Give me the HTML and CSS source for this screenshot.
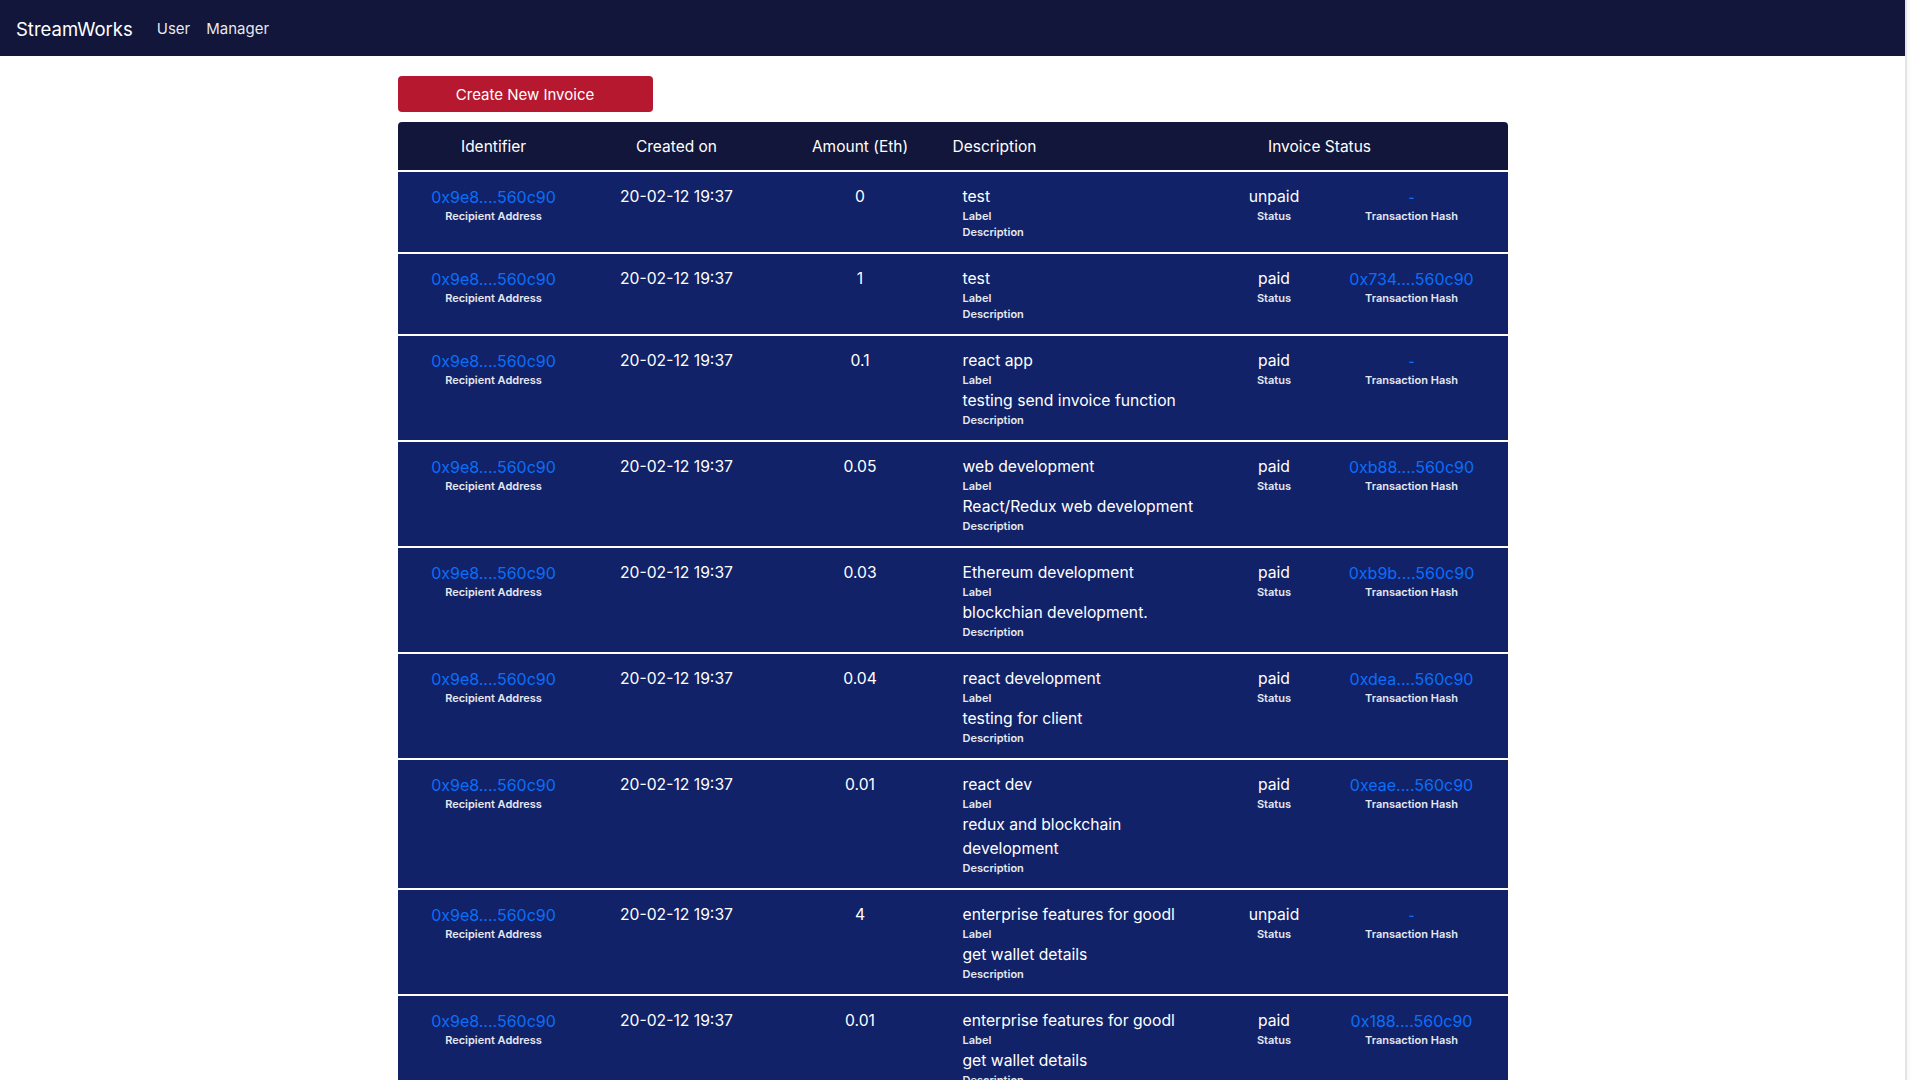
FILE: index.html
```html
<!DOCTYPE html>
<html lang="en">
<head>
<meta charset="utf-8">
<title>StreamWorks</title>
<link rel="stylesheet" href="styles.css">
</head>
<body>
<div class="app">
  <nav class="navbar">
    <span class="brand">StreamWorks</span>
    <a class="nav-link">User</a>
    <a class="nav-link">Manager</a>
  </nav>
  <main class="container">
    <button class="btn-create">Create New Invoice</button>
    <div class="table">
      <div class="thead">
        <div class="th">Identifier</div>
        <div class="th">Created on</div>
        <div class="th">Amount (Eth)</div>
        <div class="th th-left">Description</div>
        <div class="th">Invoice Status</div>
      </div>

      <div class="row">
        <div class="cell"><a class="link">0x9e8....560c90</a><span class="sub">Recipient Address</span></div>
        <div class="cell">20-02-12 19:37</div>
        <div class="cell">0</div>
        <div class="cell cell-desc"><span class="main">test</span><span class="sub">Label</span><span class="sub">Description</span></div>
        <div class="cell"><span class="main">unpaid</span><span class="sub">Status</span></div>
        <div class="cell"><a class="link dash">-</a><span class="sub">Transaction Hash</span></div>
      </div>

      <div class="row">
        <div class="cell"><a class="link">0x9e8....560c90</a><span class="sub">Recipient Address</span></div>
        <div class="cell">20-02-12 19:37</div>
        <div class="cell">1</div>
        <div class="cell cell-desc"><span class="main">test</span><span class="sub">Label</span><span class="sub">Description</span></div>
        <div class="cell"><span class="main">paid</span><span class="sub">Status</span></div>
        <div class="cell"><a class="link">0x734....560c90</a><span class="sub">Transaction Hash</span></div>
      </div>

      <div class="row">
        <div class="cell"><a class="link">0x9e8....560c90</a><span class="sub">Recipient Address</span></div>
        <div class="cell">20-02-12 19:37</div>
        <div class="cell">0.1</div>
        <div class="cell cell-desc"><span class="main">react app</span><span class="sub">Label</span><span class="main">testing send invoice function</span><span class="sub">Description</span></div>
        <div class="cell"><span class="main">paid</span><span class="sub">Status</span></div>
        <div class="cell"><a class="link dash">-</a><span class="sub">Transaction Hash</span></div>
      </div>

      <div class="row">
        <div class="cell"><a class="link">0x9e8....560c90</a><span class="sub">Recipient Address</span></div>
        <div class="cell">20-02-12 19:37</div>
        <div class="cell">0.05</div>
        <div class="cell cell-desc"><span class="main">web development</span><span class="sub">Label</span><span class="main">React/Redux web development</span><span class="sub">Description</span></div>
        <div class="cell"><span class="main">paid</span><span class="sub">Status</span></div>
        <div class="cell"><a class="link">0xb88....560c90</a><span class="sub">Transaction Hash</span></div>
      </div>

      <div class="row">
        <div class="cell"><a class="link">0x9e8....560c90</a><span class="sub">Recipient Address</span></div>
        <div class="cell">20-02-12 19:37</div>
        <div class="cell">0.03</div>
        <div class="cell cell-desc"><span class="main">Ethereum development</span><span class="sub">Label</span><span class="main">blockchian development.</span><span class="sub">Description</span></div>
        <div class="cell"><span class="main">paid</span><span class="sub">Status</span></div>
        <div class="cell"><a class="link">0xb9b....560c90</a><span class="sub">Transaction Hash</span></div>
      </div>

      <div class="row">
        <div class="cell"><a class="link">0x9e8....560c90</a><span class="sub">Recipient Address</span></div>
        <div class="cell">20-02-12 19:37</div>
        <div class="cell">0.04</div>
        <div class="cell cell-desc"><span class="main">react development</span><span class="sub">Label</span><span class="main">testing for client</span><span class="sub">Description</span></div>
        <div class="cell"><span class="main">paid</span><span class="sub">Status</span></div>
        <div class="cell"><a class="link">0xdea....560c90</a><span class="sub">Transaction Hash</span></div>
      </div>

      <div class="row">
        <div class="cell"><a class="link">0x9e8....560c90</a><span class="sub">Recipient Address</span></div>
        <div class="cell">20-02-12 19:37</div>
        <div class="cell">0.01</div>
        <div class="cell cell-desc"><span class="main">react dev</span><span class="sub">Label</span><span class="main">redux and blockchain development</span><span class="sub">Description</span></div>
        <div class="cell"><span class="main">paid</span><span class="sub">Status</span></div>
        <div class="cell"><a class="link">0xeae....560c90</a><span class="sub">Transaction Hash</span></div>
      </div>

      <div class="row">
        <div class="cell"><a class="link">0x9e8....560c90</a><span class="sub">Recipient Address</span></div>
        <div class="cell">20-02-12 19:37</div>
        <div class="cell">4</div>
        <div class="cell cell-desc"><span class="main">enterprise features for goodl</span><span class="sub">Label</span><span class="main">get wallet details</span><span class="sub">Description</span></div>
        <div class="cell"><span class="main">unpaid</span><span class="sub">Status</span></div>
        <div class="cell"><a class="link dash">-</a><span class="sub">Transaction Hash</span></div>
      </div>

      <div class="row">
        <div class="cell"><a class="link">0x9e8....560c90</a><span class="sub">Recipient Address</span></div>
        <div class="cell">20-02-12 19:37</div>
        <div class="cell">0.01</div>
        <div class="cell cell-desc"><span class="main">enterprise features for goodl</span><span class="sub">Label</span><span class="main">get wallet details</span><span class="sub">Description</span></div>
        <div class="cell"><span class="main">paid</span><span class="sub">Status</span></div>
        <div class="cell"><a class="link">0x188....560c90</a><span class="sub">Transaction Hash</span></div>
      </div>
    </div>
  </main>
</div>
<div class="gutter"></div>
</body>
</html>
```
FILE: styles.css
```css
html, body {
  margin: 0;
  height: 100%;
  overflow: hidden;
  background: #fff;
}
body {
  font-family: Inter, "Noto Sans", "Liberation Sans", sans-serif;
  font-size: 16px;
  line-height: 24px;
  color: #fff;
}
.app {
  margin-right: 5px;
}
.gutter {
  position: fixed;
  top: 0;
  right: 0;
  bottom: 0;
  width: 3px;
  border-left: 2px solid #e4e4e4;
  background: #fafafa;
}
.navbar {
  height: 56px;
  background: #12163a;
  display: flex;
  align-items: center;
  padding: 2px 16px 0;
  box-sizing: border-box;
}
.brand {
  font-size: 18.5px;
  line-height: 30px;
  margin-right: 16px;
  color: #fff;
}
.nav-link {
  padding: 0 8px;
  color: rgba(255,255,255,0.92);
  font-size: 15px;
}
.container {
  width: 1140px;
  margin: 0 auto;
  padding: 20px 15px 0;
  box-sizing: border-box;
}
.btn-create {
  display: block;
  width: 255px;
  height: 36px;
  border: none;
  border-radius: 4px;
  background: #b5182f;
  color: #fff;
  font-family: inherit;
  font-size: 15px;
  padding: 0;
  margin: 0 0 10px;
}
.table {
  display: flex;
  flex-direction: column;
  gap: 2px;
}
.thead {
  height: 48px;
  padding-top: 1px;
  box-sizing: border-box;
  background: #12163a;
  border-radius: 4px 4px 0 0;
  display: grid;
  grid-template-columns: 192px 174px 193px 175px 1fr;
  align-items: center;
}
.th {
  text-align: center;
  font-size: 15.5px;
}
.th-left {
  text-align: left;
  margin-left: -4px;
}
.row {
  background: #112268;
  display: grid;
  grid-template-columns: 192px 174px 193px 250px 135px 140px;
  padding: 13px 0 11px;
  align-items: start;
}
.cell {
  display: flex;
  flex-direction: column;
  align-items: center;
  text-align: center;
  font-size: 15.7px;
}
.cell-desc {
  align-items: flex-start;
  text-align: left;
  padding: 0 6px;
}
.main {
  display: block;
}
.link {
  color: #0a6efa;
  font-size: 16px;
}
.dash {
  font-size: 13px;
  font-weight: 600;
}
.sub {
  display: block;
  font-size: 11px;
  line-height: 14px;
  padding-bottom: 2px;
  font-weight: 600;
  color: #e6e8f0;
}
```
